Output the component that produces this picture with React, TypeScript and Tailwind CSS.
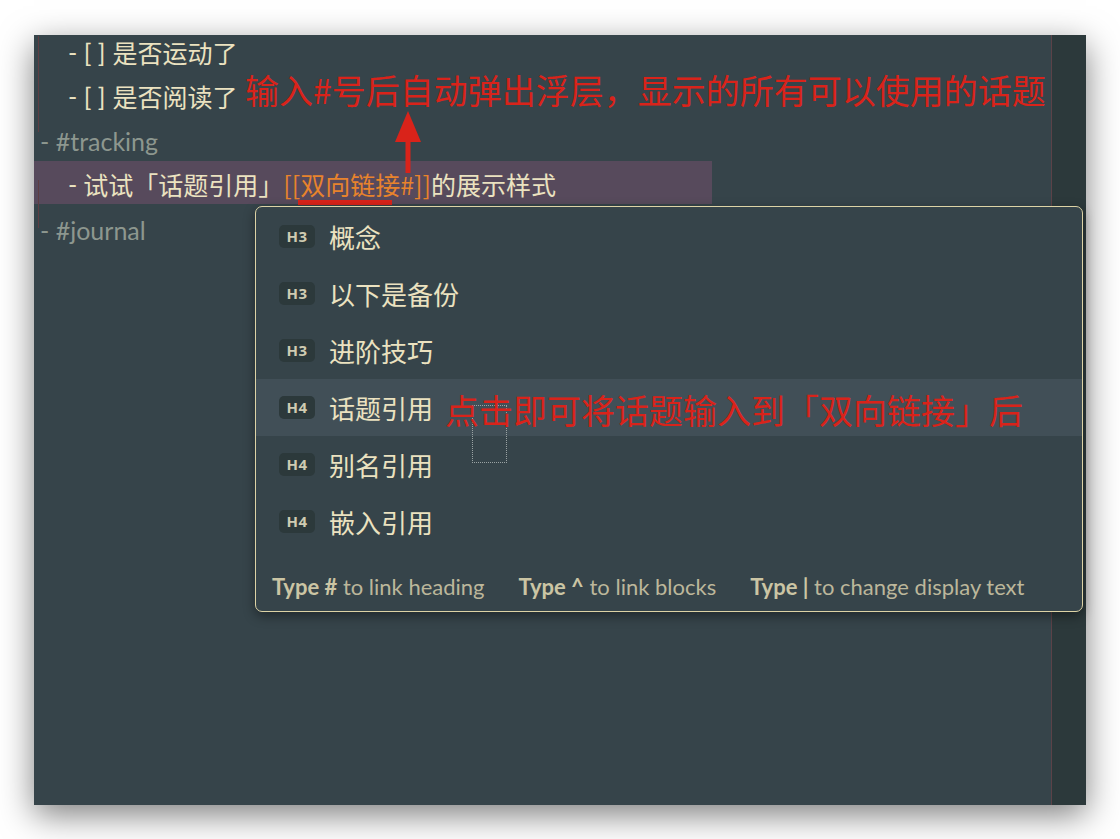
const body = { fontFamily: 'Lato, "Noto Sans CJK SC", sans-serif' };
const cjk = { fontFamily: '"Noto Sans CJK SC", "Noto Sans", sans-serif' };

const items = [
  { level: "H3", title: "概念" },
  { level: "H3", title: "以下是备份" },
  { level: "H3", title: "进阶技巧" },
  { level: "H4", title: "话题引用", active: true },
  { level: "H4", title: "别名引用" },
  { level: "H4", title: "嵌入引用" },
];

const hints = [
  { key: "Type #", rest: " to link heading" },
  { key: "Type ^", rest: " to link blocks" },
  { key: "Type |", rest: " to change display text" },
];

const App = () => {
  return (
    <div className="w-[1120px] h-[839px] bg-white pl-[34px] pt-[35px]" style={body}>
      <div className="relative flex w-[1052px] h-[770px] bg-[#36444a] shadow-[0_10px_32px_rgba(0,0,0,0.5)]">
        {/* editor */}
        <div className="relative flex-1 border-r border-[#5b4248] text-[25px] text-[#ebe2c0]">
          <div className="absolute left-[4px] top-[1px] w-px h-[96px] bg-[#5e3d42]" />
          <div className="absolute left-[4px] top-[145px] w-px h-[48px] bg-[#5e3d42]" />

          <div className="flex flex-col mt-[-4px]">
            <div className="h-[44px] flex items-center pl-[34px]">
              <span>- [ ] </span>
              <span className="ml-[7px]" style={cjk}>是否运动了</span>
            </div>
            <div className="h-[44px] flex items-center pl-[34px]">
              <span>- [ ] </span>
              <span className="ml-[7px]" style={cjk}>是否阅读了</span>
            </div>
            <div className="h-[42px] flex items-center pl-[6px] pt-[4px] text-[#8d978f]">- #tracking</div>
            <div className="h-[43px] w-[678px] flex items-center pl-[34px] pt-[5px] bg-[#574a5c]">
              <span>- </span>
              <span className="ml-[6px]" style={cjk}>试试「话题引用」</span>
              <span className="text-[#e8832c]" style={cjk}>[[双向链接#]]</span>
              <span style={cjk}>的展示样式</span>
            </div>
            <div className="h-[48px] flex items-center pl-[6px] pt-[6px] text-[#8d978f]">- #journal</div>
          </div>

          {/* annotation: arrow + underline */}
          <svg className="absolute left-[361px] top-[76px]" width="26" height="62" viewBox="0 0 26 62">
            <polygon points="13,0 26,31 0,31" fill="#d9231a" />
            <rect x="10.5" y="30" width="5" height="32" fill="#d9231a" />
          </svg>
          <div className="absolute left-[264px] top-[165px] w-[94px] h-[5px] bg-[#d9231a]" />
          <div
            className="absolute left-[211px] top-[34px] leading-[42px] text-[34px] text-[#d9231a] whitespace-nowrap z-20"
            style={cjk}
          >
            输入#号后自动弹出浮层，显示的所有可以使用的话题
          </div>

          {/* suggestion popup */}
          <div className="absolute left-[221px] top-[171px] w-[828px] h-[406px] rounded-[7px] border border-[#ddd3a6] bg-[#36444a] shadow-[0_4px_12px_rgba(0,0,0,0.4)] pt-[1px] flex flex-col z-10">
            {items.map((it) => (
              <div
                key={it.title}
                className={`h-[57px] flex items-center pl-[23px] gap-[14px] ${it.active ? "bg-[#414f57]" : ""}`}
              >
                <span
                  className="w-[36px] h-[23px] rounded-[5px] bg-[#2c393b] flex items-center justify-center text-[15px] font-bold tracking-[0.5px] text-[#cfcbb2]"
                  style={{ fontFamily: '"Open Sans", sans-serif' }}
                >
                  {it.level}
                </span>
                <span className="text-[26px] text-[#ebe2c0]" style={cjk}>{it.title}</span>
              </div>
            ))}
            <div className="flex-1 flex items-center gap-[34px] pl-[16px] pt-[12px] text-[22px] text-[#bcb79b]">
              {hints.map((h) => (
                <span key={h.key} className="whitespace-nowrap">
                  <span className="font-bold text-[#cbc5a4]">{h.key}</span>
                  {h.rest}
                </span>
              ))}
            </div>
          </div>

          <div className="absolute left-[438px] top-[370px] w-[35px] h-[58px] border border-dotted border-[#9aa3a3] z-20" />
          <div
            className="absolute left-[411px] top-[354px] leading-[42px] text-[34px] text-[#d9231a] whitespace-nowrap z-20"
            style={cjk}
          >
            点击即可将话题输入到「双向链接」后
          </div>
        </div>
        {/* right gutter */}
        <div className="w-[34px] bg-[#2c393b]" />
      </div>
    </div>
  );
};

export default App;
